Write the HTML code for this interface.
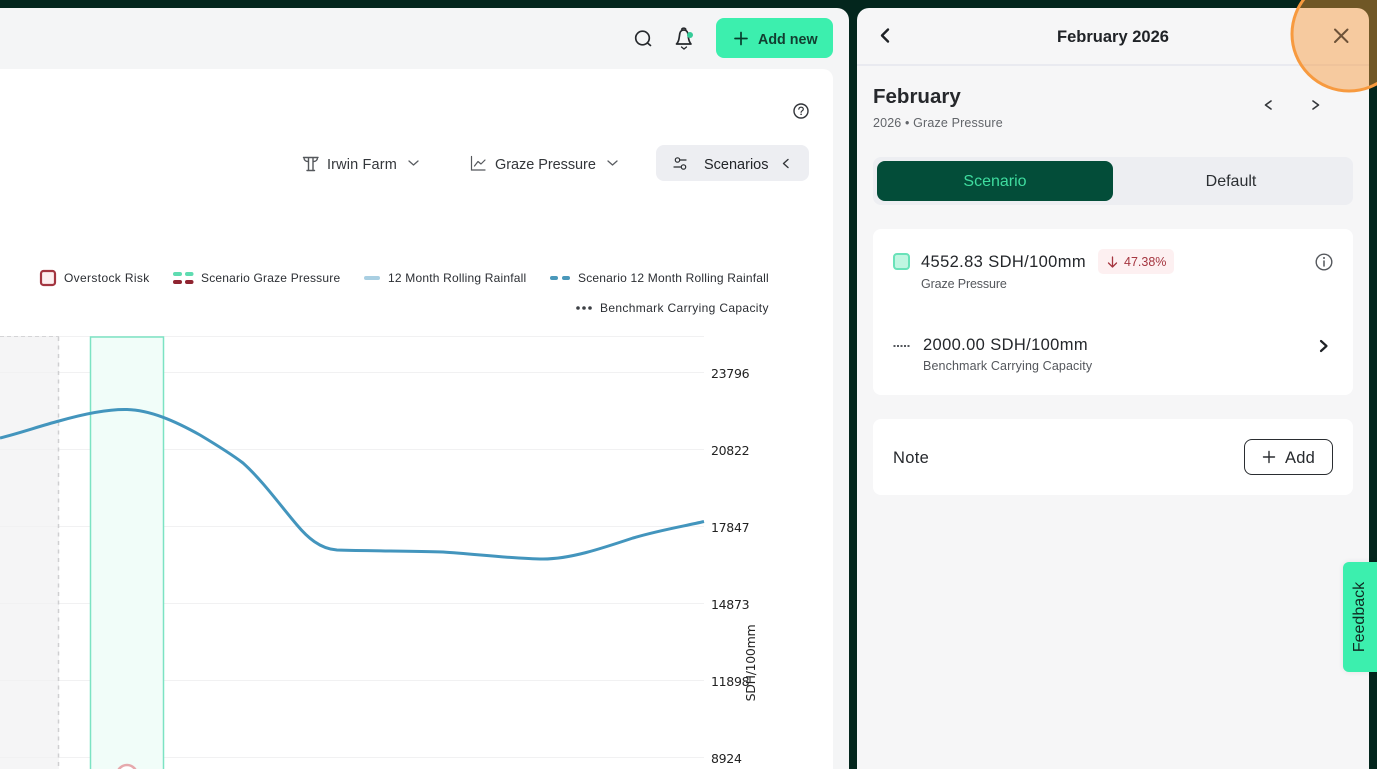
<!DOCTYPE html>
<html lang="en"><head><meta charset="utf-8"><title>February 2026</title>
<style>
html,body{margin:0;padding:0;width:1377px;height:769px;overflow:hidden;background:#03261d;font-family:"Liberation Sans",sans-serif;color:#222529}
.a{position:absolute;white-space:nowrap}
.leg{font-size:12px;color:#2b2e33;letter-spacing:.2px;line-height:14px}
.ax{font-family:"DejaVu Sans","Liberation Sans",sans-serif;font-size:12.500px;color:#222;line-height:16px;letter-spacing:-.3px}
</style></head><body>
<div class="a" style="left:0;top:8px;width:849px;height:761px;background:#f4f5f6;border-top-right-radius:12px"></div>
<div class="a" style="left:0;top:69px;width:833px;height:700px;background:#fff;border-top-right-radius:10px"></div>

<svg class="a" style="left:0;top:0" width="849" height="769" fill="none">
<rect x="0" y="337" width="59" height="432" fill="#f5f5f6"/>
<g stroke="#f1f1f2" stroke-width="1"><path d="M0 336.500H704M0 372.500H704M0 449.500H704M0 526.500H704M0 603.500H704M0 680.500H704M0 757.500H704"/></g>
<path d="M0 336.500H59" stroke="#d4d4d6" stroke-dasharray="4 3"/>
<path d="M58.500 337V769" stroke="#cfcfd1" stroke-width="1.500" stroke-dasharray="4 4.500"/>
<rect x="90.500" y="337" width="73" height="440" fill="#f1fdf9" stroke="#7ce3c3" stroke-width="1.500"/>
<circle cx="127" cy="775" r="10" fill="#fff" stroke="#e6a9ad" stroke-width="2.500"/>
<path d="M0 438C20 433 40 426 59 421C80 415 105 409 127 409.500C150 410 175 421 200 435C215 444 230 453 243 463C262 480 280 505 297 525C307 537 320 549 337 550C370 551 410 551 443 552C475 554 515 559 543 559C570 559 600 549 633 538C660 530 685 526 704 521.500" stroke="#4395bd" stroke-width="3"/>
<!-- Search -->
<circle cx="642.500" cy="38" r="6.800" stroke="#25282c" stroke-width="1.700"/><path d="M647.500 43L650.500 45.500" stroke="#25282c" stroke-width="1.700" stroke-linecap="round"/>
<!-- Bell -->
<path d="M676.500 44c1.500-1.500 2.300-3.500 2.700-6.500l.6-4c.3-2 1.900-3.500 4-3.500s3.700 1.500 4 3.500l.7 4.500c.4 2.800 1.200 4.500 2.500 6z" stroke="#25282c" stroke-width="1.700" stroke-linejoin="round"/><path d="M681.500 29.800c.5-2.300 4-2.300 4.500 0" stroke="#25282c" stroke-width="1.500"/><path d="M681.500 47l2.500 2 2.500-2" stroke="#25282c" stroke-width="1.300" stroke-linecap="round"/><circle cx="690" cy="35" r="3" fill="#35cb98"/>
<!-- Add new -->
<rect x="716" y="18" width="117" height="40" rx="8" fill="#3cefae"/>
<path d="M741 32.500V44.500M735 38.500H747" stroke="#063d2c" stroke-width="1.700" stroke-linecap="round"/>
<!-- Help -->
<circle cx="801" cy="111" r="7" stroke="#303338" stroke-width="1.400"/>
<path d="M798.800 109.200c.2-1.300 1.100-2 2.300-2s2.200.8 2.200 1.900c0 1.700-2.200 1.700-2.200 3.200" stroke="#303338" stroke-width="1.200" stroke-linecap="round"/><circle cx="801.100" cy="114.300" r=".8" fill="#303338"/>
<!-- Irwin tower -->
<path d="M303.500 157.500H318M304 157.500C304 160 305.500 161.500 308 161.500M317.500 157.500C317.500 160 316 161.500 313.500 161.500M308.500 157.500V170.500M313 157.500V170.500M307 170.500H314.500" stroke="#55585c" stroke-width="1.400" stroke-linecap="round"/>
<path d="M409 161l4.500 4 4.500-4M608 161l4.500 4 4.500-4" stroke="#5a5d62" stroke-width="1.300" stroke-linecap="round" stroke-linejoin="round"/>
<!-- Chart icon -->
<path d="M471.500 156.500V170H485" stroke="#55585c" stroke-width="1.200" stroke-linecap="round"/><path d="M474.500 166L478 161.500L481 164L485 160" stroke="#55585c" stroke-width="1.200" stroke-linecap="round" stroke-linejoin="round"/>
<!-- Scenarios -->
<rect x="656" y="145" width="153" height="36" rx="8" fill="#edeef2"/>
<circle cx="677.500" cy="160" r="2.200" stroke="#2a2d31" stroke-width="1.200"/><path d="M680 160H686M674 167H680.500" stroke="#2a2d31" stroke-width="1.200" stroke-linecap="round"/><circle cx="683.500" cy="167" r="2.200" stroke="#2a2d31" stroke-width="1.200"/>
<path d="M788 159.500L783.500 163.500L788 167.500" stroke="#33363a" stroke-width="1.400" stroke-linecap="round" stroke-linejoin="round"/>
<!-- Legend icons -->
<rect x="41" y="271" width="14" height="14" rx="2.500" fill="#fdeff0" stroke="#a33540" stroke-width="2.200"/>
<rect x="173" y="272" width="9" height="4" rx="2" fill="#5fdcb1"/><rect x="185" y="272" width="8.500" height="4" rx="2" fill="#5fdcb1"/>
<rect x="173" y="280" width="9" height="4" rx="2" fill="#8f2430"/><rect x="185" y="280" width="8.500" height="4" rx="2" fill="#8f2430"/>
<rect x="364" y="276" width="16" height="4" rx="2" fill="#a9cfe2"/>
<rect x="550" y="276" width="8" height="4" rx="2" fill="#4a98ba"/><rect x="562" y="276" width="8" height="4" rx="2" fill="#4a98ba"/>
<g fill="#3d4045"><circle cx="578" cy="308" r="1.800"/><circle cx="584" cy="308" r="1.800"/><circle cx="590" cy="308" r="1.800"/></g>
</svg>

<div class="a" style="left:758px;top:31px;font-size:14.300px;line-height:18px;font-weight:bold;color:#123d30">Add new</div>
<div class="a" style="left:327px;top:156px;font-size:14.500px;line-height:18px;color:#34373b;letter-spacing:.15px">Irwin Farm</div>
<div class="a" style="left:495px;top:156px;font-size:14.500px;line-height:18px;color:#34373b;letter-spacing:-.05px">Graze Pressure</div>
<div class="a" style="left:704px;top:156px;font-size:14.500px;line-height:18px;color:#222529;letter-spacing:0">Scenarios</div>
<div class="a leg" style="left:64px;top:271px;letter-spacing:.35px">Overstock Risk</div>
<div class="a leg" style="left:201px;top:271px">Scenario Graze Pressure</div>
<div class="a leg" style="left:388px;top:271px">12 Month Rolling Rainfall</div>
<div class="a leg" style="left:578px;top:271px">Scenario 12 Month Rolling Rainfall</div>
<div class="a leg" style="left:600px;top:301px;letter-spacing:.35px">Benchmark Carrying Capacity</div>
<div class="a ax" style="left:711px;top:366px">23796</div>
<div class="a ax" style="left:711px;top:443px">20822</div>
<div class="a ax" style="left:711px;top:520px">17847</div>
<div class="a ax" style="left:711px;top:597px">14873</div>
<div class="a ax" style="left:711px;top:674px">11898</div>
<div class="a ax" style="left:711px;top:751px">8924</div>
<div class="a ax" style="left:751px;top:663px;transform:translate(-50%,-50%) rotate(-90deg)">SDH/100mm</div>

<!-- Right panel -->
<div class="a" style="left:857px;top:8px;width:512px;height:761px;background:#f6f6f7;border-top-left-radius:12px;border-top-right-radius:12px"></div>
<div class="a" style="left:857px;top:64px;width:512px;height:1.500px;background:#e9eaf0"></div>
<svg class="a" style="left:857px;top:8px" width="520" height="761" fill="none">
<path d="M31 21.500L25 27.500L31 33.500" stroke="#1f2226" stroke-width="2.400" stroke-linecap="round" stroke-linejoin="round"/>
<path d="M414 93L408.500 97L414 101M456 93L461.500 97L456 101" stroke="#34373b" stroke-width="1.600" stroke-linecap="round" stroke-linejoin="round"/>
</svg>
<div class="a" style="left:873px;top:27px;width:480px;text-align:center;font-size:16.500px;line-height:20px;font-weight:bold;color:#202327">February 2026</div>
<div class="a" style="left:873px;top:85px;font-size:20.500px;line-height:24px;font-weight:bold;color:#26282c">February</div>
<div class="a" style="left:873px;top:116px;font-size:12.500px;line-height:15px;color:#62656a;letter-spacing:.15px">2026 • Graze Pressure</div>

<div class="a" style="left:873px;top:157px;width:480px;height:48px;background:#edeef2;border-radius:8px"></div>
<div class="a" style="left:877px;top:161px;width:236px;height:40px;background:#034d39;border-radius:8px;text-align:center;font-size:16px;line-height:41px;color:#3fdc9f">Scenario</div>
<div class="a" style="left:1113px;top:161px;width:236px;height:40px;text-align:center;font-size:16px;line-height:41px;color:#2c2f33">Default</div>

<div class="a" style="left:873px;top:229px;width:480px;height:166px;background:#fff;border-radius:8px"></div>
<div class="a" style="left:873px;top:419px;width:480px;height:76px;background:#fff;border-radius:8px"></div>
<div class="a" style="left:893px;top:253px;width:13px;height:13px;background:#bff6e1;border:2px solid #69e2b9;border-radius:4px"></div>
<div class="a" style="left:921px;top:252px;font-size:16.500px;line-height:20px;color:#24272b;letter-spacing:.37px">4552.83 SDH/100mm</div>
<div class="a" style="left:921px;top:277px;font-size:12.500px;line-height:15px;color:#54575c;letter-spacing:-.13px">Graze Pressure</div>
<div class="a" style="left:1098px;top:249px;width:76px;height:25px;background:#fdf0f1;border-radius:5px"></div>
<div class="a" style="left:1124px;top:255px;font-size:12.500px;line-height:15px;color:#a53640">47.38%</div>
<div class="a" style="left:923px;top:335px;font-size:16.500px;line-height:20px;color:#24272b;letter-spacing:.37px">2000.00 SDH/100mm</div>
<div class="a" style="left:923px;top:359px;font-size:12.500px;line-height:15px;color:#54575c;letter-spacing:.12px">Benchmark Carrying Capacity</div>
<div class="a" style="left:893px;top:448px;font-size:16.500px;line-height:20px;color:#26292d;letter-spacing:.3px">Note</div>
<div class="a" style="left:1244px;top:439px;width:87px;height:34px;background:#fff;border:1px solid #2a2d31;border-radius:8px"></div>
<div class="a" style="left:1285px;top:448px;font-size:16.500px;line-height:20px;color:#26292d;letter-spacing:.2px">Add</div>

<svg class="a" style="left:0;top:0" width="1377" height="769" fill="none">
<path d="M1112.500 257V267M1108.500 263L1112.500 267L1116.500 263" stroke="#a53640" stroke-width="1.300" stroke-linecap="round" stroke-linejoin="round"/>
<circle cx="1324" cy="262" r="7.800" stroke="#55585d" stroke-width="1.400"/><path d="M1324 261V266" stroke="#55585d" stroke-width="1.500" stroke-linecap="round"/><circle cx="1324" cy="258" r="1" fill="#55585d"/>
<g fill="#55585d"><rect x="893.500" y="345" width="2" height="2"/><rect x="897" y="345" width="2" height="2"/><rect x="900.500" y="345" width="2" height="2"/><rect x="904" y="345" width="2" height="2"/><rect x="907.500" y="345" width="2" height="2"/></g>
<path d="M1321 341L1326.500 346L1321 351" stroke="#1f2226" stroke-width="2.200" stroke-linecap="round" stroke-linejoin="round"/>
<path d="M1269 451.500V462.500M1263.500 457H1274.500" stroke="#2a2d31" stroke-width="1.400" stroke-linecap="round"/>
<circle cx="1349" cy="34" r="57" fill="#f79433" fill-opacity=".45" stroke="#f79a3f" stroke-width="3"/>
<path d="M1335 29.500L1347.500 42M1347.500 29.500L1335 42" stroke="#6d5238" stroke-width="2" stroke-linecap="round"/>
</svg>

<div class="a" style="left:1343px;top:562px;width:34px;height:110px;background:#3cefae;border-radius:6px 0 0 6px;box-shadow:0 0 6px rgba(0,0,0,.08)"></div>
<div class="a" style="left:1360px;top:617px;transform:translate(-50%,-50%) rotate(-90deg);font-size:16px;line-height:18px;color:#0f2a22">Feedback</div>
</body></html>
